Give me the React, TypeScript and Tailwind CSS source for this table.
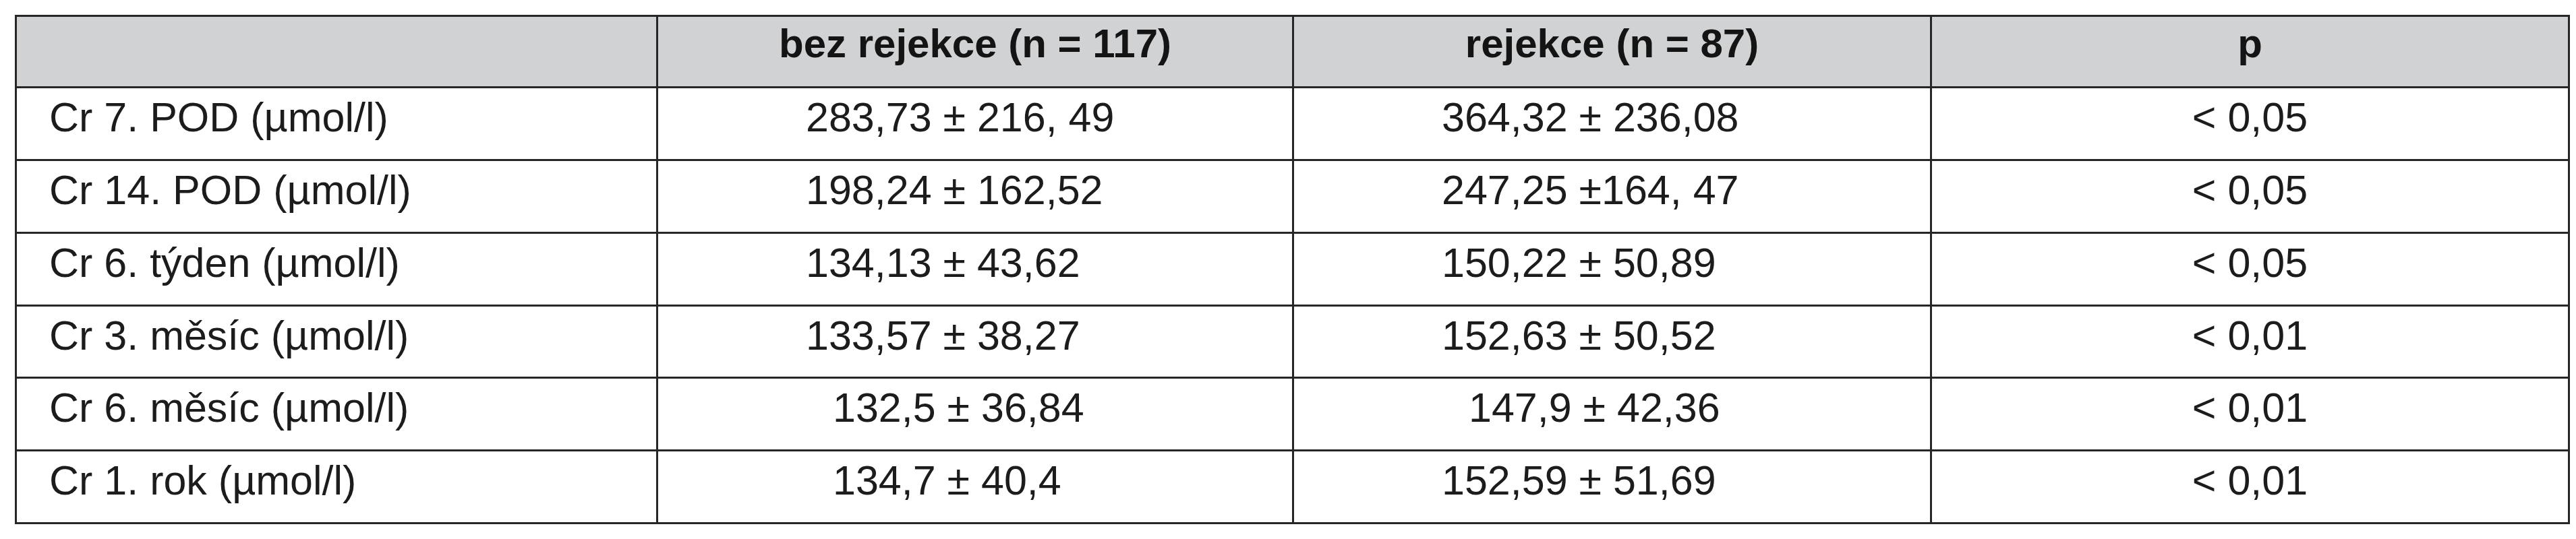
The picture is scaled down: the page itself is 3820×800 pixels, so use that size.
import React from 'react';

type Row = {
  label: string;
  a: string;
  b: string;
  p: string;
  aIndent?: boolean;
  bIndent?: boolean;
  h: string;
};

const rows: Row[] = [
  { label: 'Cr 7. POD (µmol/l)', a: '283,73 ± 216, 49', b: '364,32 ± 236,08', p: '< 0,05', h: 'h-[108px]' },
  { label: 'Cr 14. POD (µmol/l)', a: '198,24 ± 162,52', b: '247,25 ±164, 47', p: '< 0,05', h: 'h-[108px]' },
  { label: 'Cr 6. týden (µmol/l)', a: '134,13 ± 43,62', b: '150,22 ± 50,89', p: '< 0,05', h: 'h-[108px]' },
  { label: 'Cr 3. měsíc (µmol/l)', a: '133,57 ± 38,27', b: '152,63 ± 50,52', p: '< 0,01', h: 'h-[107px]' },
  { label: 'Cr 6. měsíc (µmol/l)', a: '132,5 ± 36,84', b: '147,9 ± 42,36', p: '< 0,01', aIndent: true, bIndent: true, h: 'h-[108px]' },
  { label: 'Cr 1. rok (µmol/l)', a: '134,7 ± 40,4', b: '152,59 ± 51,69', p: '< 0,01', aIndent: true, h: 'h-[108px]' },
];

export default function App() {
  return (
    <div className="min-h-screen bg-white pt-[22px] pl-[22px] font-['Liberation_Sans',Arial,sans-serif]">
      <div className="w-[3789px] border-t-[3px] border-l-[3px] border-r-[3px] border-[#262626]">
        {/* Header */}
        <div className="flex h-[106px] border-b-[3px] border-[#262626] bg-[#d1d2d4] text-[60px] font-bold leading-[60px] text-[#141414]">
          <div className="w-[951px] shrink-0 border-r-[3px] border-[#262626]" />
          <div className="w-[943px] shrink-0 border-r-[3px] border-[#262626] pt-[10px] text-center">
            bez rejekce (n = 117)
          </div>
          <div className="w-[946px] shrink-0 border-r-[3px] border-[#262626] pt-[10px] text-center">
            rejekce (n = 87)
          </div>
          <div className="flex-1 pt-[10px] text-center">p</div>
        </div>

        {/* Body */}
        {rows.map((r) => (
          <div
            key={r.label}
            className={`flex ${r.h} border-b-[3px] border-[#262626] text-[61px] leading-[61px] text-[#1c1c1c]`}
          >
            <div className="w-[951px] shrink-0 border-r-[3px] border-[#262626] pl-[48px] pt-[13px] whitespace-pre">
              {r.label}
            </div>
            <div
              className={`w-[943px] shrink-0 border-r-[3px] border-[#262626] pt-[13px] whitespace-pre ${
                r.aIndent ? 'pl-[259px]' : 'pl-[219px]'
              }`}
            >
              {r.a}
            </div>
            <div
              className={`w-[946px] shrink-0 border-r-[3px] border-[#262626] pt-[13px] whitespace-pre ${
                r.bIndent ? 'pl-[259px]' : 'pl-[219px]'
              }`}
            >
              {r.b}
            </div>
            <div className="flex-1 pt-[13px] text-center whitespace-pre">{r.p}</div>
          </div>
        ))}
      </div>
    </div>
  );
}
